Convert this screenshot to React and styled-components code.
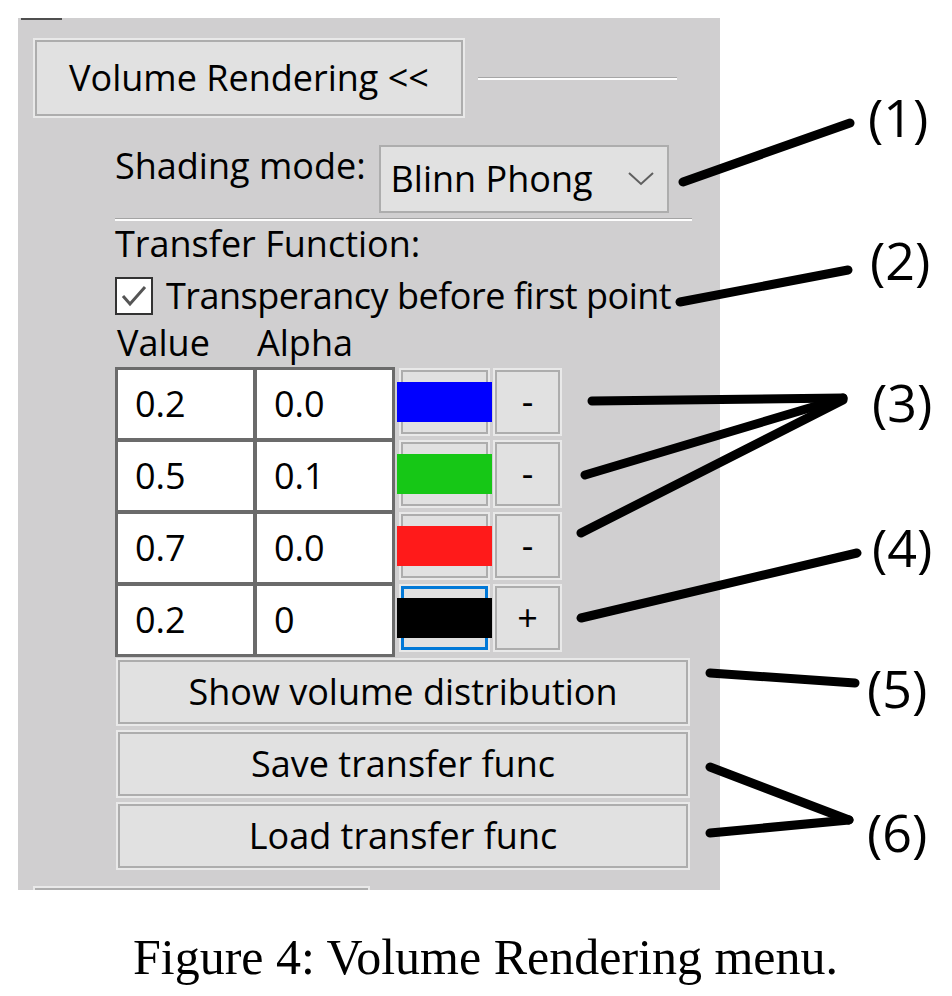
import styled, { createGlobalStyle } from "styled-components";

const GlobalStyle = createGlobalStyle`
  html, body {
    margin: 0;
    padding: 0;
    background: #fff;
  }
  body {
    font-family: "Open Sans", "Noto Sans", sans-serif;
    color: #000;
  }
`;

const Page = styled.div`
  position: relative;
  width: 952px;
  height: 996px;
  box-sizing: border-box;
  padding: 18px 0 0 18px;
`;

const Panel = styled.div`
  width: 702px;
  height: 872px;
  background: #d0cfd0;
  overflow: hidden;
  font-size: 36px;
  line-height: 40px;
`;

const TopTick = styled.div`
  margin-left: 3px;
  width: 41px;
  height: 2px;
  background: #4f4f4f;
`;

const HeaderRow = styled.div`
  display: flex;
  align-items: center;
  gap: 15px;
  margin: 20px 0 0 17px;
`;

const WinButton = styled.div`
  box-sizing: border-box;
  display: flex;
  align-items: center;
  justify-content: center;
  background: #e1e1e1;
  border: ${(p) => (p.$focused ? "3px solid #0078d7" : "2px solid #adadad")};
  box-shadow: 0 0 0 2px #e9e9e9;
  white-space: nowrap;
`;

const ToggleButton = styled(WinButton)`
  width: 428px;
  height: 76px;
`;

const HeaderRule = styled.div`
  width: 199px;
  border-top: 1px solid #a6a6a6;
  border-bottom: 2px solid #fdfdfd;
`;

const Body = styled.div`
  display: flex;
  flex-direction: column;
  align-items: flex-start;
  padding-left: 97px;
`;

const ShadingRow = styled.div`
  display: flex;
  align-items: flex-start;
  gap: 13px;
  margin-top: 29px;
`;

const Label = styled.span`
  flex: 0 0 248px;
  margin-top: 1px;
  white-space: nowrap;
`;

const Select = styled.div`
  box-sizing: border-box;
  width: 290px;
  height: 68px;
  display: flex;
  align-items: center;
  justify-content: space-between;
  padding: 0 13px 0 10px;
  background: #e1e1e1;
  border: 2px solid #adadad;
`;

const Separator = styled.div`
  width: 577px;
  margin-top: 5px;
  border-top: 1px solid #a4a4a4;
  border-bottom: 2px solid #fdfdfd;
`;

const SectionLabel = styled.div`
  margin-top: 3px;
`;

const CheckRow = styled.div`
  display: flex;
  align-items: center;
  gap: 13px;
  height: 40px;
  margin-top: 12px;
  white-space: nowrap;
  letter-spacing: -0.5px;
`;

const CheckBox = styled.div`
  box-sizing: border-box;
  width: 38px;
  height: 38px;
  border: 2px solid #333;
  background: #fff;
  display: flex;
  align-items: center;
  justify-content: center;
`;

const ColumnHeads = styled.div`
  display: grid;
  grid-template-columns: 140px 140px;
  padding-left: 2px;
  margin-top: 7px;
`;

const PointsArea = styled.div`
  display: flex;
  align-items: flex-start;
  gap: 6px;
  margin-top: 4px;
`;

const PointTable = styled.div`
  display: grid;
  grid-template-columns: 135px 135px;
  grid-template-rows: repeat(4, 68px);
  gap: 4px;
  padding: 3px;
  background: #6b6b6b;
`;

const Cell = styled.div`
  display: flex;
  align-items: center;
  padding-left: 17px;
  background: #fff;
`;

const SideGrid = styled.div`
  display: grid;
  grid-template-columns: 87px 65px;
  grid-auto-rows: 64px;
  column-gap: 7px;
  row-gap: 8px;
  padding-top: 3px;
`;

const Swatch = styled.div`
  flex: 0 0 95px;
  height: 40px;
  background: ${(p) => p.$color};
`;

const ActionList = styled.div`
  display: flex;
  flex-direction: column;
  gap: 8px;
  margin: 3px 0 0 3px;
`;

const ActionButton = styled(WinButton)`
  width: 570px;
  height: 64px;
`;

const NextSection = styled(WinButton)`
  width: 333px;
  height: 76px;
  margin: 20px 0 0 17px;
`;

const Caption = styled.div`
  margin-top: 39px;
  padding-left: 115px;
  font-family: "Liberation Serif", "Times New Roman", serif;
  font-size: 50px;
  line-height: 56px;
  white-space: nowrap;
`;

const Callouts = styled.svg`
  position: absolute;
  top: 0;
  left: 0;
  pointer-events: none;
`;

const points = [
  { value: "0.2", alpha: "0.0", color: "#0000ff", sign: "-" },
  { value: "0.5", alpha: "0.1", color: "#16c716", sign: "-" },
  { value: "0.7", alpha: "0.0", color: "#ff1a1a", sign: "-" },
  { value: "0.2", alpha: "0", color: "#000", sign: "+", focused: true },
];

const lines = [
  [683, 182, 850, 123],
  [680, 302, 848, 270],
  [592, 401, 843, 398],
  [585, 475, 843, 398],
  [581, 533, 843, 400],
  [581, 618, 857, 553],
  [710, 673, 855, 683],
  [710, 767, 849, 820],
  [710, 833, 849, 820],
];

const labels = [
  [868, 137, "(1)"],
  [870, 280, "(2)"],
  [872, 422, "(3)"],
  [872, 567, "(4)"],
  [867, 708, "(5)"],
  [867, 852, "(6)"],
];

export default function App() {
  return (
    <Page>
      <GlobalStyle />
      <Panel>
        <TopTick />
        <HeaderRow>
          <ToggleButton>Volume Rendering &lt;&lt;</ToggleButton>
          <HeaderRule />
        </HeaderRow>
        <Body>
          <ShadingRow>
            <Label>Shading mode:</Label>
            <Select>
              <span>Blinn Phong</span>
              <svg width="26" height="14" viewBox="0 0 26 14">
                <polyline points="1,1 13,12 25,1" fill="none" stroke="#5f5f5f" strokeWidth="2" />
              </svg>
            </Select>
          </ShadingRow>
          <Separator />
          <SectionLabel>Transfer Function:</SectionLabel>
          <CheckRow>
            <CheckBox>
              <svg width="30" height="30" viewBox="0 0 30 30">
                <polyline points="4,15 11,23 26,6" fill="none" stroke="#555" strokeWidth="3" />
              </svg>
            </CheckBox>
            Transperancy before first point
          </CheckRow>
          <ColumnHeads>
            <span>Value</span>
            <span>Alpha</span>
          </ColumnHeads>
          <PointsArea>
            <PointTable>
              {points.map((p, i) => [
                <Cell key={`v${i}`}>{p.value}</Cell>,
                <Cell key={`a${i}`}>{p.alpha}</Cell>,
              ])}
            </PointTable>
            <SideGrid>
              {points.map((p, i) => [
                <WinButton key={`c${i}`} $focused={p.focused}>
                  <Swatch $color={p.color} />
                </WinButton>,
                <WinButton key={`s${i}`}>{p.sign}</WinButton>,
              ])}
            </SideGrid>
          </PointsArea>
          <ActionList>
            <ActionButton>Show volume distribution</ActionButton>
            <ActionButton>Save transfer func</ActionButton>
            <ActionButton>Load transfer func</ActionButton>
          </ActionList>
        </Body>
        <NextSection />
      </Panel>
      <Caption>Figure 4: Volume Rendering menu.</Caption>
      <Callouts width="952" height="996" viewBox="0 0 952 996">
        {lines.map(([x1, y1, x2, y2], i) => (
          <line key={i} x1={x1} y1={y1} x2={x2} y2={y2} stroke="#000" strokeWidth="9" strokeLinecap="round" />
        ))}
        {labels.map(([x, y, t]) => (
          <text key={t} x={x} y={y} fontFamily="Open Sans, sans-serif" fontSize="52" fill="#000">
            {t}
          </text>
        ))}
      </Callouts>
    </Page>
  );
}
